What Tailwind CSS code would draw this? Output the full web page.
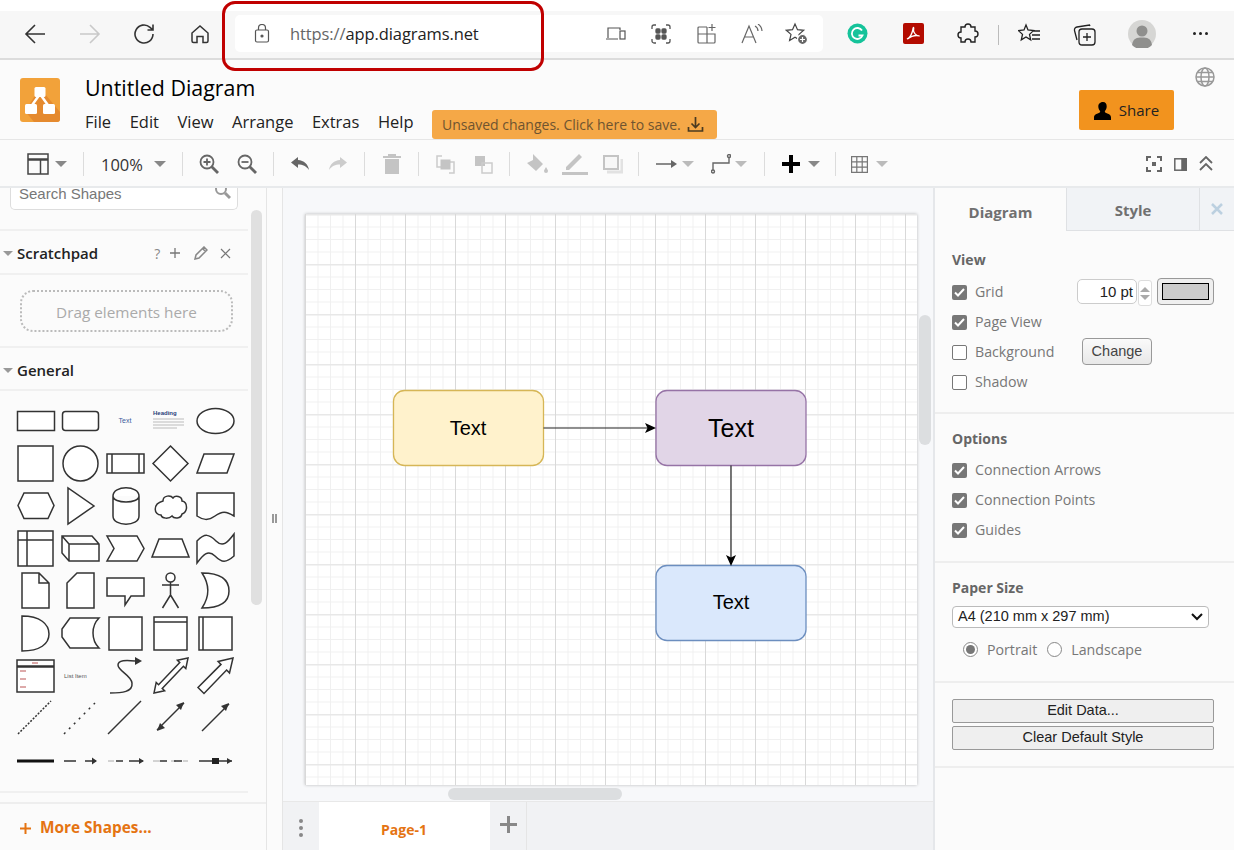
<!DOCTYPE html>
<html lang="en">
<head>
<meta charset="UTF-8">
<title>Untitled Diagram - draw.io</title>
<script src="https://cdn.jsdelivr.net/npm/@tailwindcss/browser@4"></script>
</head>
<body class="relative w-[1234px] h-[850px] overflow-hidden bg-white font-['Open_Sans',sans-serif] text-[#222]">

<!-- browser chrome -->
<div class="pt-[11px] bg-white">
  <div class="h-[49px] bg-[#f7f7f7] border-b-2 border-[#dcdcdc] flex items-start pt-[4px]">
    <svg class="ml-[24px] mt-[8px] shrink-0" width="22" height="22" viewBox="0 0 22 22" fill="none" stroke="#333" stroke-width="1.6"><path d="M21 11H2M11 2l-9 9 9 9"/></svg>
    <svg class="ml-[33px] mt-[8px] shrink-0" width="22" height="22" viewBox="0 0 22 22" fill="none" stroke="#c9c9c9" stroke-width="1.6"><path d="M1 11h19M11 2l9 9-9 9"/></svg>
    <svg class="ml-[33px] mt-[8px] shrink-0" width="22" height="22" viewBox="0 0 22 22" fill="none" stroke="#333" stroke-width="1.6"><path d="M19 11a9 9 0 1 1-3-6.7L19 7M19 1.500V7h-5.500"/></svg>
    <svg class="ml-[34px] mt-[9px] shrink-0" width="20" height="20" viewBox="0 0 20 20" fill="none" stroke="#333" stroke-width="1.500"><path d="M2 9l8-7 8 7v8a1.500 1.500 0 0 1-1.500 1.500H13v-6H7v6H3.500A1.500 1.500 0 0 1 2 17z"/></svg>
    <div class="ml-[25px] w-[588px] h-[37px] shrink-0 bg-white rounded-[5px] flex items-center">
      <svg class="ml-[19px]" width="16" height="19" viewBox="0 0 16 19" fill="none" stroke="#555" stroke-width="1.200"><rect x="1.500" y="6" width="13" height="12" rx="1.500"/><path d="M4.500 6V4a3.500 3.500 0 0 1 7 0v2"/><circle cx="8" cy="12" r="1" fill="#555"/></svg>
      <div class="ml-[20px] w-[190px] pt-[2px] text-[16.500px] text-[#222] tracking-[-0.1px] whitespace-nowrap"><span class="text-[#666]">https://</span>app.diagrams.net</div>
      <svg class="ml-[126px] shrink-0" width="20" height="18" viewBox="0 0 20 18" fill="none" stroke="#555" stroke-width="1.200"><path d="M2 13V3h12v2M0 14h12"/><rect x="14" y="6" width="5" height="8"/></svg>
      <svg class="ml-[25px] shrink-0" width="20" height="20" viewBox="0 0 20 20" fill="none" stroke="#555" stroke-width="1.300"><path d="M1 5V3a2 2 0 0 1 2-2h2M15 1h2a2 2 0 0 1 2 2v2M19 15v2a2 2 0 0 1-2 2h-2M5 19H3a2 2 0 0 1-2-2v-2"/><rect x="5" y="5" width="4" height="4" rx="1" fill="#555"/><rect x="11" y="5" width="4" height="4" rx="1" fill="#555"/><rect x="5" y="11" width="4" height="4" rx="1" fill="#555"/><rect x="11" y="11" width="4" height="4" rx="1" fill="#555"/></svg>
      <svg class="ml-[26px] shrink-0" width="20" height="20" viewBox="0 0 20 20" fill="none" stroke="#666" stroke-width="1.200"><path d="M10 3H2a1 1 0 0 0-1 1v14a1 1 0 0 0 1 1h15a1 1 0 0 0 1-1V10H1M10 3v16M15 0v7M11.500 3.500h7"/></svg>
      <svg class="ml-[24px] shrink-0" width="22" height="20" viewBox="0 0 22 20" fill="none" stroke="#666" stroke-width="1.200"><path d="M1 19L8 2l7 17M3.500 13h9M14 2a6 6 0 0 1 3 5M17 0a9 9 0 0 1 4 7"/></svg>
      <svg class="ml-[22px] shrink-0" width="24" height="24" viewBox="0 0 24 24" fill="none" stroke="#444" stroke-width="1.200"><path d="M10 2l2.500 5.700 6.200.6-4.700 4.100 1.400 6.100-5.400-3.200-5.400 3.200 1.400-6.100L1.300 8.300l6.200-.6z"/><circle cx="17.500" cy="17.500" r="5" fill="#666" stroke="#fff"/><path d="M17.500 15v5M15 17.500h5" stroke="#fff"/></svg>
    </div>
    <svg class="ml-[24px] mt-[8px] shrink-0" width="21" height="21" viewBox="0 0 21 21"><circle cx="10.500" cy="10.500" r="10" fill="#15c39a"/><path d="M15 7.500a5.500 5.500 0 1 0 .5 5h-4" fill="none" stroke="#fff" stroke-width="1.800"/></svg>
    <svg class="ml-[35px] mt-[8px] shrink-0" width="21" height="21" viewBox="0 0 21 21"><rect width="21" height="21" rx="2" fill="#b30b00"/><path d="M4 16c3-1 5-5 6-10 .5-3 1-1 .5 1-.3 3 3 6 6 6-3-1-8 0-12.500 3z" fill="none" stroke="#fff" stroke-width="1.300"/></svg>
    <svg class="ml-[33px] mt-[8px] shrink-0" width="22" height="22" viewBox="0 0 22 22" fill="none" stroke="#222" stroke-width="1.400"><path d="M8 4a3 3 0 0 1 6 0h4v4a3 3 0 0 1 0 6v5h-4a3 3 0 0 0-6 0H4v-4a3 3 0 0 1 0-6V4z"/></svg>
    <div class="ml-[19px] mt-[10px] w-px h-[20px] bg-[#bbb] shrink-0"></div>
    <svg class="ml-[19px] mt-[8px] shrink-0" width="23" height="22" viewBox="0 0 23 22" fill="none" stroke="#222" stroke-width="1.300"><path d="M8 2l2 5 5.500.6-4 3.800 1.200 5.400L8 14l-4.700 2.800 1.200-5.400-4-3.800L6 7zM15 8h7M14 12h8M14 16h8"/></svg>
    <svg class="ml-[32px] mt-[8px] shrink-0" width="23" height="23" viewBox="0 0 23 23" fill="none" stroke="#222" stroke-width="1.300"><rect x="6" y="6" width="16" height="16" rx="3"/><path d="M14 10v8M10 14h8M17 3l-.5-1L4 4a3 3 0 0 0-2.500 3.500L4 17"/></svg>
    <svg class="ml-[32px] mt-[5px] shrink-0" width="28" height="28" viewBox="0 0 28 28"><circle cx="14" cy="14" r="14" fill="#d6d6d4"/><circle cx="14" cy="11" r="5.500" fill="#8f8f8d"/><path d="M4 25c1-7 5-7.500 10-7.500s9 .5 10 7.500a14 14 0 0 1-20 0z" fill="#8f8f8d"/></svg>
    <div class="ml-[37px] mt-[17px] flex gap-[3px] shrink-0">
      <div class="w-[3px] h-[3px] rounded-full bg-[#222]"></div>
      <div class="w-[3px] h-[3px] rounded-full bg-[#222]"></div>
      <div class="w-[3px] h-[3px] rounded-full bg-[#222]"></div>
    </div>
  </div>
</div>

<!-- app header -->
<div class="relative h-[80px] bg-[#fbfbfb] border-b border-[#e6e6e6] flex">
  <svg class="ml-[20px] mt-[18px]" width="40" height="44" viewBox="0 0 40 44"><rect width="40" height="44" rx="3" fill="#f2a23a"/><path d="M20 10l20 24v7a3 3 0 0 1-3 3H14L5 33z" fill="#e58a2f"/><path d="M20 16L10 30M20 16l10 14" stroke="#fff" stroke-width="2.500"/><rect x="14.500" y="9" width="11" height="10" rx="1.500" fill="#fff"/><rect x="5" y="26" width="12" height="10" rx="1.500" fill="#fff"/><rect x="23" y="26" width="12" height="10" rx="1.500" fill="#fff"/></svg>
  <div class="ml-[25px] pt-[12px]">
    <div class="text-[21.400px] leading-[32px] text-black">Untitled Diagram</div>
    <div class="flex items-center mt-[1px]">
      <div class="flex gap-[18.500px] text-[16.500px] leading-[24px] text-[#222] w-[347px]"><span>File</span><span>Edit</span><span>View</span><span>Arrange</span><span>Extras</span><span>Help</span></div>
      <div class="h-[29px] w-[285px] rounded-[3px] bg-[#f5a847] text-[14px] text-[#6f5430] flex items-center pl-[10px] gap-[6px] mt-[5px]">
        Unsaved changes. Click here to save.
        <svg width="17" height="17" viewBox="0 0 17 17" fill="none" stroke="#4a3a20" stroke-width="1.700"><path d="M8.500 1v10M4.500 7.500l4 4 4-4M1.500 11v4h14v-4"/></svg>
      </div>
    </div>
  </div>
  <div class="absolute left-[1079px] top-[30px] w-[95px] h-[40px] rounded-[2px] bg-[#f2931e] flex items-center justify-center gap-[7px] text-[15px] text-[#222] pt-[1px]">
    <svg width="18" height="18" viewBox="0 0 18 18" fill="#000"><path d="M9 0c2.500 0 3.700 1.800 3.700 4.300 0 2-.8 3.600-1.700 4.700-.5.700 0 1.500 1 2 2.500 1 5 1.500 5 4.500V18H0v-2.500c0-3 2.500-3.500 5-4.500 1-.5 1.500-1.300 1-2-.9-1.100-1.700-2.700-1.700-4.700C4.300 1.800 6.500 0 9 0z"/></svg>
    Share
  </div>
  <svg class="absolute left-[1195px] top-[7px]" width="20" height="20" viewBox="0 0 20 20" fill="none" stroke="#999" stroke-width="1.500"><circle cx="10" cy="10" r="9"/><ellipse cx="10" cy="10" rx="4" ry="9"/><path d="M1 10h18M2.500 5.500h15M2.500 14.500h15"/></svg>
</div>

<!-- toolbar -->
<div class="h-[48px] bg-[#fbfbfb] border-b-2 border-[#e8eaec] flex items-center pt-[2px] text-[#777]">
  <div class="w-[83px] flex items-center pl-[27px] gap-[6px]">
    <svg width="22" height="22" viewBox="0 0 22 22" fill="none" stroke="#444" stroke-width="1.500"><rect x="1" y="1" width="20" height="20"/><path d="M1 6.500h20" stroke-width="2.500"/><path d="M13.500 6.500V21"/></svg>
    <div class="border-x-[6px] border-x-transparent border-t-[6px] border-t-[#888]"></div>
  </div>
  <div class="w-px h-[24px] bg-[#dcdcdc]"></div>
  <div class="w-[98px] flex items-center pl-[17px]">
    <span class="text-[16.500px] text-[#333] w-[53px] pt-[2px]">100%</span>
    <div class="border-x-[6px] border-x-transparent border-t-[6px] border-t-[#888]"></div>
  </div>
  <div class="w-px h-[24px] bg-[#dcdcdc]"></div>
  <div class="w-[90px] flex items-center pl-[7px]">
    <div class="w-[38px] flex justify-center"><svg width="20" height="20" viewBox="0 0 20 20" fill="none" stroke="#666" stroke-width="1.800"><circle cx="8" cy="8" r="6.500"/><path d="M12.500 12.500L19 19" stroke-width="2.800"/><path d="M4.500 8h7M8 4.500v7"/></svg></div>
    <div class="w-[38px] flex justify-center"><svg width="20" height="20" viewBox="0 0 20 20" fill="none" stroke="#666" stroke-width="1.800"><circle cx="8" cy="8" r="6.500"/><path d="M12.500 12.500L19 19" stroke-width="2.800"/><path d="M4.500 8h7"/></svg></div>
  </div>
  <div class="w-px h-[24px] bg-[#dcdcdc]"></div>
  <div class="w-[90px] flex items-center pl-[7px]">
    <div class="w-[38px] flex justify-center"><svg width="20" height="14" viewBox="0 0 20 14" fill="#666"><path d="M8 3V0L1 5.500 8 11V7.500c5 0 8 1.500 11 5.500-1-6-5-9.500-11-10z"/></svg></div>
    <div class="w-[38px] flex justify-center"><svg width="20" height="14" viewBox="0 0 20 14" fill="#ccc"><path d="M12 3V0l7 5.500L12 11V7.500c-5 0-8 1.500-11 5.500 1-6 5-9.500 11-10z"/></svg></div>
  </div>
  <div class="w-px h-[24px] bg-[#dcdcdc]"></div>
  <div class="w-[53px] flex justify-center"><svg width="18" height="20" viewBox="0 0 18 20" fill="#c4c4c4"><path d="M2 5h14v15H2zM0 2h5V0h8v2h5v2H0z"/></svg></div>
  <div class="w-px h-[24px] bg-[#dcdcdc]"></div>
  <div class="w-[90px] flex items-center pl-[7px]">
    <div class="w-[38px] flex justify-center"><svg width="19" height="19" viewBox="0 0 19 19" fill="none" stroke="#ccc" stroke-width="1.500"><path d="M6 1H1v11h5M13 18h5V7h-5"/><rect x="4.500" y="4.500" width="10" height="10" fill="#c4c4c4" stroke="none"/></svg></div>
    <div class="w-[38px] flex justify-center"><svg width="19" height="19" viewBox="0 0 19 19" fill="none" stroke="#ccc" stroke-width="1.500"><rect x="1" y="1" width="10" height="10" fill="#c4c4c4" stroke="none"/><rect x="8" y="8" width="10" height="10"/></svg></div>
  </div>
  <div class="w-px h-[24px] bg-[#dcdcdc]"></div>
  <div class="w-[128px] flex items-center pl-[8px]">
    <div class="w-[38px] flex justify-center"><svg width="22" height="20" viewBox="0 0 22 20" fill="#c4c4c4"><path d="M7 0l10 10-7 7L1 9l6-3zM20 13c1 2 2 3 2 4a2 2 0 0 1-4 0c0-1 1-2 2-4z"/></svg></div>
    <div class="w-[37px] flex justify-center"><svg width="26" height="22" viewBox="0 0 26 22" fill="#c4c4c4"><path d="M4 14L17 1l3 3L7 17H4zM0 19h26v3H0z"/></svg></div>
    <div class="w-[38px] flex justify-center"><svg width="21" height="20" viewBox="0 0 21 20" fill="none"><path d="M5 18h15V5" stroke="#e2e2e2" stroke-width="3"/><rect x="2" y="2" width="14" height="13" stroke="#c4c4c4" stroke-width="2" fill="#f7f7f7"/></svg></div>
  </div>
  <div class="w-px h-[24px] bg-[#dcdcdc]"></div>
  <div class="w-[125px] flex items-center pl-[17px]">
    <svg width="21" height="10" viewBox="0 0 21 10" fill="#666"><path d="M0 4.300h15v1.400H0zM15 1l6 4-6 4z"/></svg>
    <div class="ml-[5px] border-x-[6px] border-x-transparent border-t-[6px] border-t-[#bbb]"></div>
    <svg class="ml-[17px]" width="20" height="20" viewBox="0 0 20 20" fill="none" stroke="#666" stroke-width="1.400"><circle cx="2" cy="17.500" r="1.500"/><circle cx="18" cy="2" r="1.500"/><path d="M2 16V9h16V3.500"/></svg>
    <div class="ml-[4px] border-x-[6px] border-x-transparent border-t-[6px] border-t-[#bbb]"></div>
  </div>
  <div class="w-px h-[24px] bg-[#dcdcdc]"></div>
  <div class="w-[70px] flex items-center pl-[17px]">
    <svg width="18" height="18" viewBox="0 0 18 18" fill="#000"><path d="M7 0h4v7h7v4h-7v7H7v-7H0V7h7z"/></svg>
    <div class="ml-[8px] border-x-[6px] border-x-transparent border-t-[6px] border-t-[#888]"></div>
  </div>
  <div class="w-px h-[24px] bg-[#dcdcdc]"></div>
  <div class="flex-1 flex items-center pl-[15px]">
    <svg width="17" height="17" viewBox="0 0 17 17" fill="none" stroke="#777" stroke-width="1.200"><path d="M.6.600h15.800v15.800H.6zM.6 5.800h15.800M.6 11.200h15.800M5.800.600v15.800M11.200.600v15.800"/></svg>
    <div class="ml-[8px] border-x-[6px] border-x-transparent border-t-[6px] border-t-[#bbb]"></div>
    <svg class="ml-[258px]" width="16" height="16" viewBox="0 0 16 16" fill="none" stroke="#666" stroke-width="2"><path d="M1 5V1h4M11 1h4v4M15 11v4h-4M5 15H1v-4"/><rect x="6" y="6" width="4" height="4" fill="#666" stroke="none"/></svg>
    <svg class="ml-[12px]" width="13" height="13" viewBox="0 0 13 13" fill="none" stroke="#666" stroke-width="1.500"><rect x=".8" y=".8" width="11.400" height="11.400"/><rect x="8" y=".8" width="4.200" height="11.400" fill="#666"/></svg>
    <svg class="ml-[12px]" width="14" height="16" viewBox="0 0 14 16" fill="none" stroke="#666" stroke-width="1.800"><path d="M1 7l6-6 6 6M1 14l6-6 6 6"/></svg>
  </div>
</div>

<!-- main area -->
<div class="flex h-[662px]">

  <!-- shapes sidebar -->
  <div class="relative w-[267px] h-full bg-[#fbfbfb] border-r border-[#e5e5e5] flex flex-col overflow-hidden">
    <div class="w-[248px] flex-1">
      <div class="h-[43px] border-b-2 border-[#f0f0f0] pl-[10px]">
        <div class="relative w-[228px] h-[22px] bg-white border border-t-0 border-[#ddd] rounded-b-[5px] pl-[8px] text-[15px] leading-[11px] text-[#777] font-['Liberation_Sans',sans-serif]">
          Search Shapes
          <svg class="absolute right-[6px] top-0" width="16" height="12" viewBox="0 0 16 12" fill="none" stroke="#999" stroke-width="2"><circle cx="6" cy="1" r="5"/><path d="M10 5l5 5" stroke-width="3"/></svg>
        </div>
      </div>
      <div class="h-[44px] border-b-2 border-[#f0f0f0] flex items-center pl-[3px] pt-[2px]">
        <div class="border-x-[5px] border-x-transparent border-t-[5px] border-t-[#999]"></div>
        <span class="ml-[4px] text-[15px] font-semibold text-[#222]">Scratchpad</span>
        <span class="ml-[56px] text-[14px] text-[#888]">?</span>
        <svg class="ml-[9px]" width="12" height="12" viewBox="0 0 12 12" stroke="#777" stroke-width="1.300"><path d="M6 1v10M1 6h10"/></svg>
        <svg class="ml-[13px]" width="14" height="14" viewBox="0 0 14 14" fill="none" stroke="#888" stroke-width="1.500"><path d="M1 13l1-4 8-8 3 3-8 8zM8.500 2.500l3 3"/></svg>
        <svg class="ml-[12px]" width="11" height="11" viewBox="0 0 11 11" stroke="#777" stroke-width="1.200"><path d="M1 1l9 9M10 1l-9 9"/></svg>
      </div>
      <div class="h-[73px] border-b-2 border-[#f0f0f0] pl-[20px] pt-[15px]">
        <div class="w-[213px] h-[42px] rounded-[13px] border-2 border-dotted border-[#bbb] flex items-center justify-center pt-[2px] text-[15.300px] text-[#aaa]">Drag elements here</div>
      </div>
      <div class="h-[43px] border-b-2 border-[#f0f0f0] flex items-center pl-[3px] pt-[3px]">
        <div class="border-x-[5px] border-x-transparent border-t-[5px] border-t-[#999]"></div>
        <span class="ml-[4px] text-[15px] font-semibold text-[#222]">General</span>
      </div>
      <!-- palette -->
      <svg class="block" width="248" height="399" viewBox="0 392 248 399" fill="#fff" stroke="#333" stroke-width="1.500">
        <rect x="17.500" y="412.500" width="37" height="19"/>
        <rect x="62.500" y="412.500" width="36" height="19" rx="3"/>
        <text x="125" y="424" font-size="7" fill="#3b5c9e" stroke="none" text-anchor="middle" font-family="Liberation Sans">Text</text>
        <text x="153" y="416" font-size="6" font-weight="bold" fill="#2a3f7a" stroke="none" font-family="Liberation Sans">Heading</text>
        <path d="M153 420h31M153 423h31M153 426h31M153 429h24" stroke="#bbb" stroke-width="1"/>
        <ellipse cx="215.500" cy="422" rx="18.500" ry="12.500"/>

        <rect x="18" y="447" width="35" height="35"/>
        <circle cx="80.500" cy="464.500" r="17.500"/>
        <path d="M107 455h37v19h-37zM112 455v19M139 455v19"/>
        <path d="M170.500 447l17.500 17.500-17.500 17.500L153 464.500z"/>
        <path d="M204 455h30l-7 19h-30z"/>

        <path d="M24 494h24l6 12.500-6 13H24l-6-13z"/>
        <path d="M68 489v36l26-18z"/>
        <path d="M113 497c0-11 26-11 26 0v20c0 11-26 11-26 0zM113 497c0 8 26 8 26 0"/>
        <path d="M163 502c0-6 8-6 10-3 2-3 9-2 9 3 6 1 6 11 0 13-1 5-8 5-10 2-3 3-10 3-11-1-7 0-9-11 2-14z"/>
        <path d="M197 494h37v23c-8-5-12-5-19 0s-12 4-18 0z"/>

        <path d="M18 532h35v35H18zM27 532v35M18 541h35"/>
        <path d="M62 537h30l7 8v17H69l-7-8zM62 537l7 8h30M69 545v17" />
        <path d="M107 537h30l7 12.500-7 12.500h-30l7-12.500z"/>
        <path d="M159 540h23l7 18h-37z"/>
        <path d="M197 542c8-8 12-7 19 0s12 1 18-7v22c-8 7-12 7-19 0s-12-1-18 7z"/>

        <path d="M22 574h17l10 10v25H22zM39 574v10h10"/>
        <path d="M77 574h17v35H67v-25z"/>
        <path d="M107 579h37v18h-13l-6 9v-9h-18z"/>
        <circle cx="170.500" cy="578.500" r="4.500"/>
        <path d="M170.500 583v13M162 586h17M170.500 596l-8 13M170.500 596l8 13" fill="none"/>
        <path d="M202 574c20 0 27 8 27 18s-8 17-27 17c8-12 8-23 0-35z"/>

        <path d="M22 617c18 0 27 8 27 18s-9 17-27 17z"/>
        <path d="M70 619h29c-8 8-8 22 0 30H70l-8-11v-8z"/>
        <rect x="109" y="618" width="33" height="33"/>
        <path d="M154 618h33v33h-33zM154 623h33"/>
        <path d="M199 618h33v33h-33zM203 618v33"/>

        <path d="M17 661h37v32H17zM17 667h37M17 668h37"/>
        <path d="M20 672h6M20 680h6M20 688h6" stroke="#b55" stroke-width="1"/>
        <path d="M32 664h6" stroke="#b55" stroke-width="1"/>
        <text x="64" y="679" font-size="6" fill="#555" stroke="none" font-family="Liberation Sans">List Item</text>
        <path d="M110 694c12 0 23-1 22-10-1-8-14-12-14-18 0-5 8-5 17-4" fill="none"/>
        <path d="M135 658l7 4-7 4z" fill="#333" stroke="none"/>

        <path d="M188 659L185.800 669.600 183.400 667.200 162.200 689.400 164.600 691.800 154 694 156.200 683.400 158.600 685.800 179.800 663.600 177.400 661.200z"/>
        <path d="M233 659L229.500 673.900 226.600 671 204 694.500 198 688.500 221 665.400 218.100 662.500z"/>

        <path d="M18 735l33-33" stroke-dasharray="2 1.500" fill="none"/>
        <path d="M64 735l31-31" stroke-dasharray="2 5" fill="none"/>
        <path d="M108 735l33-33" fill="none"/>
        <path d="M157 731l27-27" fill="none"/>
        <path d="M157 732l3-8 5 5zM184 703l-3 8-5-5z" fill="#333" stroke="none"/>
        <path d="M202 732l27-27" fill="none"/>
        <path d="M229 704l-3 8-5-5z" fill="#333" stroke="none"/>

        <path d="M17 762h37" stroke="#111" stroke-width="3"/>
        <path d="M64 762h12M85 762h11" fill="none"/><path d="M92 758.500l5 3.500-5 3.500z" fill="#333" stroke="none"/>
        <path d="M108 762h6" stroke="#aaa" stroke-width="1" fill="none"/><path d="M116 762h7M129 762h14" fill="none"/><path d="M139 759l5 3-5 3z" fill="#333" stroke="none"/>
        <path d="M153 762h7M171 762h5M183 762h5" stroke="#aaa" stroke-width="1" fill="none"/><path d="M160 762h7M174 762h8" fill="none"/>
        <path d="M199 762h33" fill="none"/><rect x="212" y="759" width="7" height="6" fill="#222" stroke="none"/><path d="M227 759l5 3-5 3z" fill="#333" stroke="none"/>
      </svg>
    </div>
    <div class="h-[11px] w-[248px] border-t-2 border-[#f0f0f0]"></div>
    <div class="h-[48px] border-t-2 border-[#eeeeee] flex items-center pl-[20px] pt-[2px] gap-[9px] text-[15.400px] font-bold text-[#e57412]">
      <svg width="11" height="11" viewBox="0 0 11 11" stroke="#e57412" stroke-width="2"><path d="M5.500 0v11M0 5.500h11"/></svg>
      More Shapes...
    </div>
    <div class="absolute left-[251px] top-[22px] w-[11px] h-[395px] rounded-[6px] bg-[#e0e0e0]"></div>
  </div>

  <!-- splitter -->
  <div class="w-[16px] h-full bg-[#fbfbfb] border-r border-[#e5e5e5] flex items-center justify-center pb-[2px]">
    <div class="w-[5px] h-[9px] border-x-2 border-[#999]"></div>
  </div>

  <!-- canvas -->
  <div class="w-[650px] h-full flex flex-col">
    <div class="relative h-[613px] bg-[#f7f8fa] overflow-hidden">
      <svg class="absolute left-[22px] top-[26px] bg-white shadow-[0_0_3px_rgba(0,0,0,0.25)]" width="612" height="571" viewBox="305 214 612 571">
        <defs>
          <pattern id="minor" x="305" y="214" width="12.500" height="12.500" patternUnits="userSpaceOnUse"><path d="M0 .5H12.500M.5 0V12.500" fill="none" stroke="#f0f0f0" stroke-width="1"/></pattern>
          <pattern id="major" x="305" y="214" width="50" height="50" patternUnits="userSpaceOnUse"><path d="M0 .75H50" fill="none" stroke="#e8e8e8" stroke-width="1.500"/><path d="M.5 0V50" fill="none" stroke="#d9d9d9" stroke-width="1"/></pattern>
        </defs>
        <rect x="305" y="214" width="612" height="571" fill="url(#minor)"/>
        <rect x="305" y="214" width="612" height="571" fill="url(#major)"/>
        <rect x="393.500" y="390.500" width="150" height="75" rx="11" fill="#fff2cc" stroke="#d6b656" stroke-width="1.300"/>
        <rect x="656" y="390.500" width="150" height="75" rx="11" fill="#e1d5e7" stroke="#9673a6" stroke-width="1.300"/>
        <rect x="656" y="565.500" width="150" height="75" rx="11" fill="#dae8fc" stroke="#6c8ebf" stroke-width="1.300"/>
        <path d="M543.500 428H648M731 465.500V558" stroke="#222" stroke-width="1.200" fill="none"/>
        <path d="M656 428l-11-5 2.500 5-2.500 5zM731 566l-5-11 5 2.500 5-2.500z" fill="#000"/>
        <text x="468" y="435" font-family="Liberation Sans" font-size="20" text-anchor="middle" fill="#000">Text</text>
        <text x="731" y="437" font-family="Liberation Sans" font-size="25" text-anchor="middle" fill="#000">Text</text>
        <text x="731" y="609" font-family="Liberation Sans" font-size="20" text-anchor="middle" fill="#000">Text</text>
      </svg>
      <div class="absolute left-[636px] top-[127px] w-[12px] h-[130px] rounded-[6px] bg-[#dcdee0]"></div>
      <div class="absolute left-[165px] top-[600px] w-[174px] h-[12px] rounded-[6px] bg-[#dcdee0]"></div>
    </div>
    <div class="flex-1 bg-[#f1f2f4] border-t border-[#e8e8e8] flex">
      <div class="w-[36px] flex flex-col items-center gap-[3px] pt-[17px]">
        <div class="w-[4px] h-[4px] bg-[#888] rounded-full"></div>
        <div class="w-[4px] h-[4px] bg-[#888] rounded-full"></div>
        <div class="w-[4px] h-[4px] bg-[#888] rounded-full"></div>
      </div>
      <div class="w-[171px] bg-white flex items-center justify-center pt-[6px] pr-[1px] text-[14px] font-bold text-[#e57412]">Page-1</div>
      <div class="w-[37px] border-r border-[#e5e5e5] flex justify-center pt-[14px]">
        <svg width="17" height="17" viewBox="0 0 17 17" fill="#888"><path d="M7 0h3v7h7v3h-7v7H7v-7H0V7h7z"/></svg>
      </div>
    </div>
  </div>

  <!-- format panel -->
  <div class="w-[301px] h-full bg-[#fbfbfb] border-l-2 border-[#e5e7ea] text-[14.200px] text-[#777]">
    <div class="flex h-[43px] text-[15px] font-bold text-[#707070]">
      <div class="w-[131px] flex items-center justify-center pt-[6px]">Diagram</div>
      <div class="w-[133px] bg-[#f1f3f6] border-l border-b border-[#dfe1e4] flex items-center justify-center pt-[2px]">Style</div>
      <div class="flex-1 bg-[#f1f3f6] border-l border-b border-[#dfe1e4] flex items-center justify-center">
        <svg width="12" height="12" viewBox="0 0 12 12" stroke="#bcd0e0" stroke-width="2.500"><path d="M1 1l10 10M11 1L1 11"/></svg>
      </div>
    </div>

    <div class="h-[183px] border-b-2 border-[#eeeeee] pl-[17px] pt-[19px] relative">
      <div class="font-bold text-[14px] leading-[20px] text-[#666]">View</div>
      <div class="mt-[7px] flex flex-col">
        <div class="h-[30px] flex items-center gap-[8px]"><div class="w-[15px] h-[15px] rounded-[2px] bg-[#777] flex items-center justify-center"><svg width="11" height="9" viewBox="0 0 11 9" fill="none" stroke="#fff" stroke-width="2"><path d="M1 4.500l3 3 6-6.500"/></svg></div>Grid</div>
        <div class="h-[30px] flex items-center gap-[8px]"><div class="w-[15px] h-[15px] rounded-[2px] bg-[#777] flex items-center justify-center"><svg width="11" height="9" viewBox="0 0 11 9" fill="none" stroke="#fff" stroke-width="2"><path d="M1 4.500l3 3 6-6.500"/></svg></div>Page View</div>
        <div class="h-[30px] flex items-center gap-[8px]"><div class="w-[15px] h-[15px] rounded-[2px] bg-white border border-[#777]"></div>Background</div>
        <div class="h-[30px] flex items-center gap-[8px]"><div class="w-[15px] h-[15px] rounded-[2px] bg-white border border-[#777]"></div>Shadow</div>
      </div>
      <div class="absolute left-[142px] top-[48px] w-[60px] h-[25px] bg-white border border-[#ccc] rounded-[5px] text-[15px] leading-[24px] text-right pr-[3px] text-[#222] font-['Liberation_Sans',sans-serif]">10 pt</div>
      <div class="absolute left-[203px] top-[49px] w-[14px] h-[26px] border border-[#ddd] rounded-[3px] flex flex-col items-center justify-center gap-[3px] bg-white">
        <div class="border-x-[5px] border-x-transparent border-b-[5px] border-b-[#aaa]"></div>
        <div class="border-x-[5px] border-x-transparent border-t-[5px] border-t-[#aaa]"></div>
      </div>
      <div class="absolute left-[222px] top-[47px] w-[57px] h-[27px] bg-[#efefef] border border-[#999] rounded-[4px] p-[4px]"><div class="w-full h-full bg-[#cccccc] border border-black"></div></div>
      <div class="absolute left-[147px] top-[107px] w-[70px] h-[27px] rounded-[4px] border border-[#999] bg-linear-to-b from-[#fafafa] to-[#e8e8e8] flex items-center justify-center text-[14.500px] text-[#444] font-['Liberation_Sans',sans-serif]">Change</div>
    </div>

    <div class="h-[149px] border-b-2 border-[#eeeeee] pl-[17px] pt-[15px]">
      <div class="font-bold text-[14px] leading-[20px] text-[#666]">Options</div>
      <div class="mt-[6px] flex flex-col">
        <div class="h-[30px] flex items-center gap-[8px]"><div class="w-[15px] h-[15px] rounded-[2px] bg-[#777] flex items-center justify-center"><svg width="11" height="9" viewBox="0 0 11 9" fill="none" stroke="#fff" stroke-width="2"><path d="M1 4.500l3 3 6-6.500"/></svg></div>Connection Arrows</div>
        <div class="h-[30px] flex items-center gap-[8px]"><div class="w-[15px] h-[15px] rounded-[2px] bg-[#777] flex items-center justify-center"><svg width="11" height="9" viewBox="0 0 11 9" fill="none" stroke="#fff" stroke-width="2"><path d="M1 4.500l3 3 6-6.500"/></svg></div>Connection Points</div>
        <div class="h-[30px] flex items-center gap-[8px]"><div class="w-[15px] h-[15px] rounded-[2px] bg-[#777] flex items-center justify-center"><svg width="11" height="9" viewBox="0 0 11 9" fill="none" stroke="#fff" stroke-width="2"><path d="M1 4.500l3 3 6-6.500"/></svg></div>Guides</div>
      </div>
    </div>

    <div class="h-[120px] border-b-2 border-[#eeeeee] pl-[17px] pt-[15px]">
      <div class="font-bold text-[14px] leading-[20px] text-[#666]">Paper Size</div>
      <div class="mt-[8px] w-[257px] h-[22px] bg-white border border-[#bbb] rounded-[4px] flex items-center justify-between px-[5px] text-[14.500px] text-[#222] font-['Liberation_Sans',sans-serif]">
        A4 (210 mm x 297 mm)
        <svg width="12" height="8" viewBox="0 0 12 8" fill="none" stroke="#111" stroke-width="2"><path d="M1 1l5 5 5-5"/></svg>
      </div>
      <div class="mt-[11px] ml-[11px] flex items-center">
        <div class="w-[15px] h-[15px] rounded-full border border-[#888] bg-white flex items-center justify-center"><div class="w-[9px] h-[9px] rounded-full bg-[#777]"></div></div>
        <span class="ml-[9px]">Portrait</span>
        <div class="ml-[10px] w-[15px] h-[15px] rounded-full border border-[#888] bg-white"></div>
        <span class="ml-[9px]">Landscape</span>
      </div>
    </div>

    <div class="h-[85px] border-b-2 border-[#eeeeee] pl-[17px] pt-[16px] flex flex-col gap-[3px] font-['Liberation_Sans',sans-serif] text-[14.500px] text-[#222]">
      <div class="w-[262px] h-[24px] bg-[#efefef] border border-[#999] rounded-[2px] flex items-center justify-center">Edit Data...</div>
      <div class="w-[262px] h-[24px] bg-[#efefef] border border-[#999] rounded-[2px] flex items-center justify-center">Clear Default Style</div>
    </div>
  </div>
</div>

<!-- red annotation -->
<div class="absolute left-[222px] top-[1px] w-[322px] h-[70px] border-[3px] border-[#c00000] rounded-[13px]"></div>
</body>
</html>
